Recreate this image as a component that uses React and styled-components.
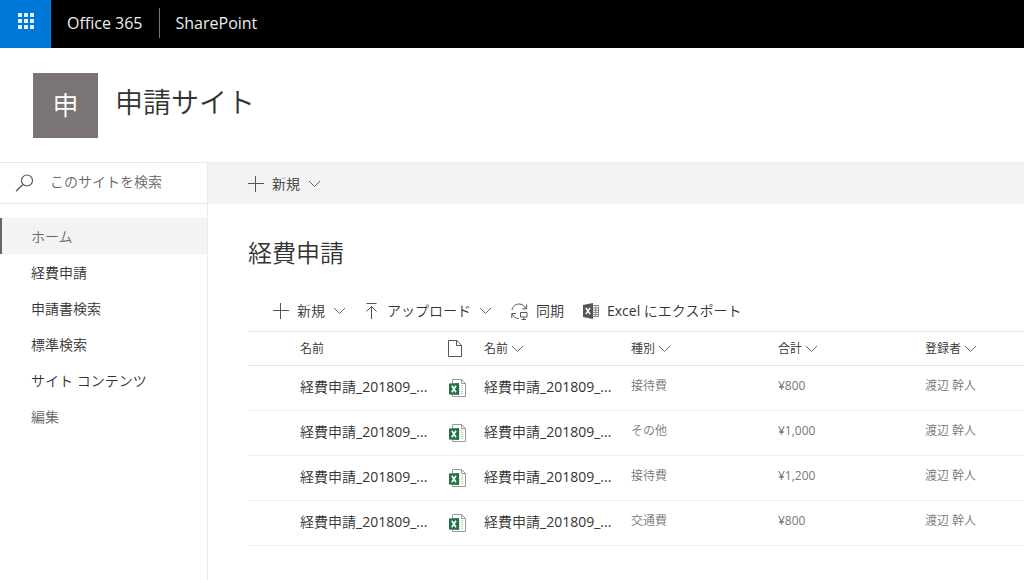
import React from 'react';
import styled, { createGlobalStyle } from 'styled-components';

const GlobalStyle = createGlobalStyle`
  *, *::before, *::after { box-sizing: border-box; }
  body {
    margin: 0;
    background: #fff;
    color: #333;
    font-family: 'Open Sans', 'Noto Sans CJK JP DemiLight', 'Noto Sans CJK JP', sans-serif;
    font-size: 14px;
    font-weight: 400;
    line-height: 20px;
  }
  button, input { font: inherit; color: inherit; }
`;

const Page = styled.div`
  display: flex;
  flex-direction: column;
  min-height: 100vh;
`;

const SuiteBar = styled.header`
  display: flex;
  align-items: center;
  height: 48px;
  background: #000;
  color: #fff;
`;

const Launcher = styled.button`
  display: flex;
  justify-content: center;
  width: 51px;
  height: 48px;
  padding: 13px 0 0;
  border: 0;
  background: #0078d7;
`;

const SuiteLink = styled.a`
  padding: 0 16px;
  border-left: ${(p) => (p.$divided ? '1px solid #777' : '0')};
  color: #eee;
  font-size: 16px;
  line-height: 30px;
  text-decoration: none;
  margin-bottom: 2px;
`;

const SiteHeader = styled.div`
  display: flex;
  align-items: flex-start;
  gap: 17px;
  height: 115px;
  padding: 25px 33px 0;
  border-bottom: 1px solid #eaeaea;
`;

const SiteLogo = styled.div`
  width: 65px;
  height: 65px;
  background: #7a7574;
  color: #fff;
  font-size: 26px;
  font-weight: 350;
  line-height: 65px;
  text-align: center;
`;

const SiteTitle = styled.h1`
  margin: 0;
  font-size: 28px;
  font-weight: 350;
  line-height: 58px;
`;

const Body = styled.div`
  display: flex;
  flex: 1;
`;

const Sidebar = styled.aside`
  flex: none;
  width: 208px;
  border-right: 1px solid #eaeaea;
`;

const Search = styled.label`
  display: flex;
  align-items: center;
  gap: 16px;
  height: 41px;
  padding-left: 15px;
  border-bottom: 1px solid #eaeaea;
  color: #555;
`;

const SearchInput = styled.input`
  flex: 1;
  min-width: 0;
  padding: 0 0 2px;
  border: 0;
  outline: 0;
  background: none;
  font-weight: 350;
  &::placeholder { color: #666; opacity: 1; }
`;

const Nav = styled.nav`
  display: flex;
  flex-direction: column;
  padding-top: 14px;
`;

const NavLink = styled.a`
  height: 36px;
  padding: 1px 0 0 29px;
  border-left: 2px solid ${(p) => (p.$current ? '#666' : 'transparent')};
  background: ${(p) => (p.$current ? '#f3f3f3' : 'none')};
  color: ${(p) => (p.$muted ? '#666' : '#333')};
  font-weight: 350;
  line-height: 36px;
  text-decoration: none;
`;

const Main = styled.main`
  flex: 1;
  min-width: 0;
`;

const CommandBar = styled.div`
  display: flex;
  align-items: center;
  height: 41px;
  padding-left: 40px;
  background: #f3f3f3;
`;

const Content = styled.section`
  padding: 32px 0 0 40px;
`;

const ListTitle = styled.h2`
  margin: 0;
  font-size: 24px;
  font-weight: 350;
  line-height: 34px;
`;

const ListTools = styled.div`
  display: flex;
  align-items: center;
  gap: 19px;
  height: 40px;
  margin-top: 21px;
  padding-left: 25px;
`;

const Command = styled.button`
  display: flex;
  align-items: center;
  gap: 8px;
  padding: 0;
  border: 0;
  background: none;
  white-space: nowrap;
`;

const Table = styled.table`
  width: 100%;
  table-layout: fixed;
  border-collapse: collapse;
  border-top: 1px solid #e4e4e4;
`;

const Col = styled.col`
  width: ${(p) => p.$width};
`;

const HeadCell = styled.th`
  height: 34px;
  padding: 0;
  border-bottom: 1px solid #e4e4e4;
  font-size: 12px;
  font-weight: 400;
  text-align: left;
  vertical-align: middle;
`;

const SortButton = styled.button`
  display: flex;
  align-items: center;
  gap: 3px;
  padding: 0;
  border: 0;
  background: none;
`;

const Cell = styled.td`
  height: 45px;
  padding: 0;
  border-bottom: 1px solid #f0f0f0;
  white-space: nowrap;
  vertical-align: middle;
`;

const NameCell = styled(Cell)`
  padding-bottom: 2px;
`;

const MetaCell = styled(Cell)`
  padding-bottom: 4px;
  color: #777;
  font-size: 12px;
`;

const IconCell = styled(Cell)`
  padding-bottom: 1px;
`;

const Icon = styled.svg`
  display: block;
  flex: none;
  fill: none;
  stroke: #555;
  stroke-width: 1;
`;

const WaffleIcon = () => (
  <Icon width="16" height="16" viewBox="0 0 16 16" aria-hidden="true">
    {[0, 6, 12].map((y) =>
      [0, 6, 12].map((x) => (
        <rect key={`${x}-${y}`} x={x} y={y} width="4" height="4" fill="#e5f1fb" stroke="none" />
      ))
    )}
  </Icon>
);

const SearchIcon = () => (
  <Icon width="19" height="18" viewBox="0 0 19 18" aria-hidden="true">
    <circle cx="12" cy="6.5" r="5.5" strokeWidth="1.2" />
    <path d="M8 10.5 1 17.3" strokeWidth="1.2" />
  </Icon>
);

const PlusIcon = () => (
  <Icon width="16" height="16" viewBox="0 0 16 16" aria-hidden="true">
    <path d="M7.5 0v16M0 7.5h16" />
  </Icon>
);

const ChevronIcon = () => (
  <Icon width="13" height="8" viewBox="0 0 13 8" aria-hidden="true">
    <path d="m1 1 5.500 5.500L12 1" strokeWidth=".9" />
  </Icon>
);

const UploadIcon = () => (
  <Icon width="14" height="16" viewBox="0 0 14 16" aria-hidden="true">
    <path d="M1.500 .5h10M6.500 16V3.500M1.500 8.500l5-5 5 5" />
  </Icon>
);

const SyncIcon = () => (
  <Icon width="17" height="17" viewBox="0 0 17 17" aria-hidden="true">
    <path d="M1 7C1.500 3.500 4.500 1 8 1c3.300 0 5.800 2 7 4.700M15.700 1.500v4.300h-4.300M.8 15v-4.500H5M1.200 10.700C2.300 13.800 4.600 15.500 7.700 15.600" />
    <path d="M9.500 9.500h6.500v4.500H9.500zM12.700 14v2.500M10.500 16.500h4.500" />
  </Icon>
);

const ExportIcon = () => (
  <Icon width="16" height="16" viewBox="0 0 16 16" aria-hidden="true">
    <path d="M10 2.500h5.500v11H10M10 5h5M10 7.200h5M10 9.400h5M10 11.500h5M12.700 2.500v11" stroke="#888" />
    <path d="M0 2 10 0v16L0 14z" fill="#555" stroke="none" />
    <path d="m2.800 4.800 4.200 6.400M7 4.800l-4.200 6.400" stroke="#fff" strokeWidth="1.500" />
  </Icon>
);

const FileIcon = () => (
  <Icon width="14" height="17" viewBox="0 0 14 17" aria-hidden="true">
    <path d="M.5.5h8.300l4.700 4.700v11.300H.5zM8.500.5v5h5" />
  </Icon>
);

const ExcelIcon = () => (
  <Icon width="19" height="20" viewBox="0 0 19 20" role="img" aria-label="Excel">
    <path d="M4.500 1.500h9l4 4v13h-13z" fill="#fff" stroke="#999" />
    <path d="M13.500 1.500v4h4" stroke="#999" />
    <path d="M10 7.500h6M10 9.500h6M10 11.500h6M10 13.500h6M10 15.500h6" stroke="#ccc" strokeDasharray="2 1" />
    <path d="M1 5.500 11 5v12l-10-.5z" fill="#217346" stroke="none" />
    <path d="m3.800 7.800 4.200 6.400M8 7.800l-4.200 6.400" stroke="#fff" strokeWidth="1.600" />
  </Icon>
);

const navItems = [
  { label: 'ホーム', current: true, muted: true },
  { label: '経費申請' },
  { label: '申請書検索' },
  { label: '標準検索' },
  { label: 'サイト コンテンツ' },
  { label: '編集', muted: true },
];

const rows = [
  { kind: '接待費', total: '¥800' },
  { kind: 'その他', total: '¥1,000' },
  { kind: '接待費', total: '¥1,200' },
  { kind: '交通費', total: '¥800' },
];

const columnWidths = ['52px', '148px', '36px', '147px', '147px', '147px', 'auto'];

export default function App() {
  return (
    <Page>
      <GlobalStyle />
      <SuiteBar>
        <Launcher aria-label="アプリ起動ツール"><WaffleIcon /></Launcher>
        <SuiteLink href="#">Office 365</SuiteLink>
        <SuiteLink href="#" $divided>SharePoint</SuiteLink>
      </SuiteBar>
      <SiteHeader>
        <SiteLogo>申</SiteLogo>
        <SiteTitle>申請サイト</SiteTitle>
      </SiteHeader>
      <Body>
        <Sidebar>
          <Search>
            <SearchIcon />
            <SearchInput type="text" placeholder="このサイトを検索" aria-label="このサイトを検索" />
          </Search>
          <Nav>
            {navItems.map((item) => (
              <NavLink key={item.label} href="#" $current={item.current} $muted={item.muted}>
                {item.label}
              </NavLink>
            ))}
          </Nav>
        </Sidebar>
        <Main>
          <CommandBar>
            <Command><PlusIcon />新規<ChevronIcon /></Command>
          </CommandBar>
          <Content>
            <ListTitle>経費申請</ListTitle>
            <ListTools>
              <Command><PlusIcon />新規<ChevronIcon /></Command>
              <Command><UploadIcon />アップロード<ChevronIcon /></Command>
              <Command><SyncIcon />同期</Command>
              <Command><ExportIcon />Excel にエクスポート</Command>
            </ListTools>
            <Table>
              <colgroup>
                {columnWidths.map((width, i) => <Col key={i} $width={width} />)}
              </colgroup>
              <thead>
                <tr>
                  <HeadCell />
                  <HeadCell>名前</HeadCell>
                  <HeadCell aria-label="種類"><FileIcon /></HeadCell>
                  {['名前', '種別', '合計', '登録者'].map((label) => (
                    <HeadCell key={label}>
                      <SortButton>{label}<ChevronIcon /></SortButton>
                    </HeadCell>
                  ))}
                </tr>
              </thead>
              <tbody>
                {rows.map((row, i) => (
                  <tr key={i}>
                    <Cell />
                    <NameCell>経費申請_201809_...</NameCell>
                    <IconCell><ExcelIcon /></IconCell>
                    <NameCell>経費申請_201809_...</NameCell>
                    <MetaCell>{row.kind}</MetaCell>
                    <MetaCell>{row.total}</MetaCell>
                    <MetaCell>渡辺 幹人</MetaCell>
                  </tr>
                ))}
              </tbody>
            </Table>
          </Content>
        </Main>
      </Body>
    </Page>
  );
}
